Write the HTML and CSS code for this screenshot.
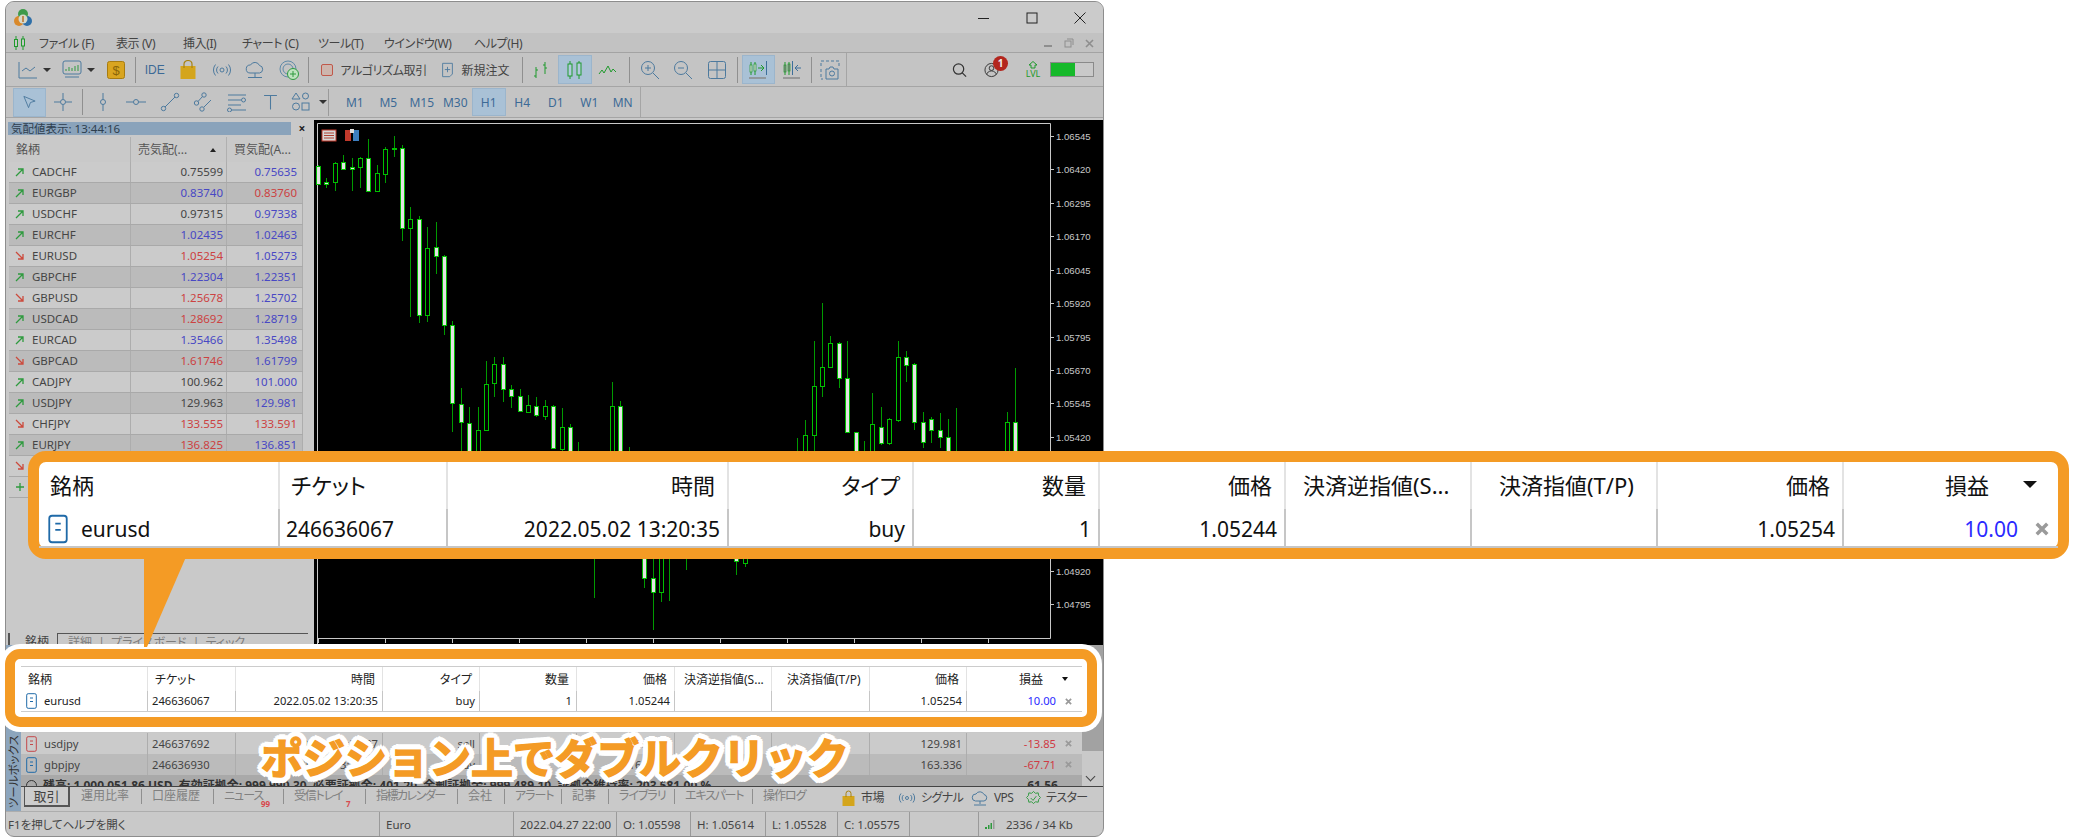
FILE: index.html
```html
<!DOCTYPE html>
<html lang="ja">
<head>
    <meta charset="UTF-8">
    <title>MetaTrader 5</title>
    <link rel="stylesheet" href="styles.css">
</head>
<body>

<div class="window">

    <!-- Title bar -->
    <div class="titlebar">
        <svg class="logo" viewBox="0 0 20 20">
            <circle cx="6" cy="13" r="5" fill="#d9892b"/>
            <circle cx="14" cy="13" r="5" fill="#2f6fa8"/>
            <circle cx="10" cy="6" r="5" fill="#3f9a4a"/>
            <circle cx="10" cy="11" r="4.5" fill="#d8d8c8"/>
            <path d="M10 8v6" stroke="#b8702a" stroke-width="1.5"/>
        </svg>
        <div class="win-btns">
            <svg viewBox="0 0 12 12"><path d="M0 6.5h11" stroke="#222" fill="none"/></svg>
            <svg viewBox="0 0 12 12"><rect x="1" y="1" width="10" height="10" stroke="#222" fill="none"/></svg>
            <svg viewBox="0 0 12 12"><path d="M0.5 0.5l11 11M11.5 0.5l-11 11" stroke="#222" fill="none"/></svg>
        </div>
    </div>

    <!-- Menu -->
    <div class="menubar">
        <svg class="menu-icon" viewBox="0 0 14 14"><path d="M3 0v14M10 0v14" stroke="#1f9a2c"/><rect x="1.5" y="3.5" width="3" height="7" fill="#c8c8c8" stroke="#1f9a2c"/><rect x="8.5" y="3" width="3" height="7" fill="#c8c8c8" stroke="#1f9a2c"/></svg>
        <span class="menu-a">ファイル (F)</span>
        <span class="menu-b">表示 (V)</span>
        <span class="menu-c">挿入(I)</span>
        <span class="menu-d">チャート (C)</span>
        <span class="menu-e">ツール(T)</span>
        <span class="menu-f">ウインドウ(W)</span>
        <span class="menu-g">ヘルプ(H)</span>
        <div class="mdi-btns">
            <svg viewBox="0 0 10 10"><path d="M1 8h8" stroke="#8e8e8e" stroke-width="2"/></svg>
            <svg viewBox="0 0 10 10"><rect x="1" y="3" width="6" height="6" fill="none" stroke="#8e8e8e"/><path d="M3 1h6v6" fill="none" stroke="#8e8e8e"/></svg>
            <svg viewBox="0 0 10 10"><path d="M1 2l7 7M8 2l-7 7" stroke="#8e8e8e" stroke-width="1.6"/></svg>
        </div>
    </div>

    <!-- Toolbar 1 -->
    <div class="toolrow top">
        <div class="tb-frame">
            <div class="drop">
                <svg class="ic20" viewBox="0 0 20 20"><path d="M1 2v16h18M4 11l4-3 4 3 5-4" class="st"/></svg>
                <i class="caret"></i>
            </div>
            <div class="drop">
                <svg class="ic20" viewBox="0 0 20 20"><rect x="1" y="1" width="18" height="13" rx="2" class="st"/><path d="M4 11V9M7 11V7M10 11V8M13 11V6M16 11V5" stroke="#2e9a3e"/><path d="M3 17h14" class="st"/></svg>
                <i class="caret"></i>
            </div>
            <div class="tool gap"><svg class="ic20" viewBox="0 0 20 20"><rect x="1.5" y="1.5" width="17" height="17" rx="2" fill="#d9a520" stroke="#a87c10"/><text x="10" y="15" class="dollar">$</text></svg></div>
            <i class="sep"></i>
            <div class="tool ide">IDE</div>
            <div class="tool"><svg class="ic20" viewBox="0 0 20 20"><path d="M2.5 6h15v13h-15z" fill="#d4a51c"/><path d="M6 8V4a4 3.5 0 018 0v4" fill="none" stroke="#a8820f" stroke-width="1.2"/></svg></div>
            <div class="tool"><svg class="ic20" viewBox="0 0 20 20"><circle cx="10" cy="10" r="2" class="st"/><path d="M6 6.5a5 5 0 000 7M14 6.5a5 5 0 010 7M3.5 4.5a8.5 8.5 0 000 11M16.5 4.5a8.5 8.5 0 010 11" class="st"/></svg></div>
            <div class="tool"><svg class="ic20" viewBox="0 0 20 20"><path d="M5 13a4 4 0 01.5-8 5 5 0 019 .5 3.8 3.8 0 010 7.5z" class="st"/><path d="M10 13v4M3 17.5h14" class="st"/></svg></div>
            <div class="tool"><svg class="ic20" viewBox="0 0 20 20"><circle cx="9" cy="9" r="8" class="st-g"/><circle cx="9" cy="9" r="5" class="st-g"/><circle cx="14" cy="14" r="5.5" fill="#bfe3bf" stroke="#2e9a3e"/><path d="M14 11v6M11 14h6" stroke="#2e9a3e"/></svg></div>
            <i class="sep"></i>
            <div class="txt-btn algo"><i class="algo-box"></i><span>アルゴリズム取引</span></div>
            <div class="txt-btn order">
                <svg class="ic16" viewBox="0 0 14 18"><path d="M1.5 1.5h11v12l-3 3h-8z" class="st"/><path d="M7 5.5v6M4 8.5h6" class="st"/></svg><span>新規注文</span>
            </div>
            <i class="sep"></i>
            <div class="tool"><svg class="ic20" viewBox="0 0 20 20"><path d="M5 7v11M3 16h2M5 10h2M14 2v12M12 5h2M14 8h2" stroke="#1f9a2c" fill="none"/></svg></div>
            <div class="tool on"><svg class="ic20" viewBox="0 0 20 20"><path d="M5 1v18M14 1v18" stroke="#1f9a2c"/><rect x="3" y="4" width="4" height="12" fill="#b3cadf" stroke="#1f9a2c"/><rect x="12" y="3" width="4" height="12" fill="#b3cadf" stroke="#1f9a2c"/></svg></div>
            <div class="tool"><svg class="ic20" viewBox="0 0 20 20"><path d="M1 14l3-4 2 3 4-7 3 6 2-3 3 3" fill="none" stroke="#1f9a2c"/></svg></div>
            <i class="sep wide"></i>
            <div class="tool"><svg class="ic20" viewBox="0 0 20 20"><circle cx="8" cy="8" r="6.5" class="st"/><path d="M8 5v6M5 8h6M13 13l6 6" class="st"/></svg></div>
            <div class="tool"><svg class="ic20" viewBox="0 0 20 20"><circle cx="8" cy="8" r="6.5" class="st"/><path d="M5 8h6M13 13l6 6" class="st"/></svg></div>
            <div class="tool"><svg class="ic20" viewBox="0 0 20 20"><rect x="1.5" y="1.5" width="17" height="17" rx="2" class="st"/><path d="M10 1.5v17M1.5 10h17" class="st"/></svg></div>
            <i class="sep wide"></i>
            <div class="tool on"><svg class="ic20" viewBox="0 0 20 20"><path d="M3 2v13M7 2v13" stroke="#1f9a2c"/><rect x="2" y="5" width="2" height="7" fill="#d8d8d8" stroke="#1f9a2c" stroke-width=".7"/><rect x="6" y="4" width="2" height="7" fill="#d8d8d8" stroke="#1f9a2c" stroke-width=".7"/><path d="M10 8h5M13 5l3 3-3 3" stroke="#1f9a2c" fill="none"/><path d="M18.5 1v14" stroke="#3d6f9a"/><path d="M1 18h17" stroke="#8a8a8a" stroke-width="1.5"/></svg></div>
            <div class="tool"><svg class="ic20" viewBox="0 0 20 20"><path d="M3 2v13M7 2v13" stroke="#1f9a2c"/><rect x="2" y="5" width="2" height="7" fill="#888" stroke="#1f9a2c" stroke-width=".7"/><rect x="6" y="4" width="2" height="7" fill="#888" stroke="#1f9a2c" stroke-width=".7"/><path d="M10.5 1v14" stroke="#3d6f9a"/><path d="M19 8h-5M16 5l-3 3 3 3" stroke="#3d6f9a" fill="none"/><path d="M1 18h17" stroke="#8a8a8a" stroke-width="1.5"/></svg></div>
            <i class="sep"></i>
            <div class="tool"><svg class="ic20" viewBox="0 0 20 20"><path d="M1 6V1h18v5M1 9v10h2" class="st dash"/><path d="M6 9h3l1-2h3l1 2h4v10H6z" class="st"/><circle cx="12" cy="13.5" r="2.5" class="st"/></svg></div>
        </div>
        <div class="right-icons">
            <svg class="ic16" viewBox="0 0 16 16"><circle cx="7" cy="7" r="5.5" fill="none" stroke="#333" stroke-width="1.3"/><path d="M11 11l4 4" stroke="#333" stroke-width="1.3"/></svg>
            <div class="user">
                <svg class="ic16" viewBox="0 0 16 16"><circle cx="8" cy="8" r="7" fill="none" stroke="#333"/><circle cx="8" cy="6" r="2.5" fill="none" stroke="#333"/><path d="M3 13a5 4 0 0110 0" fill="none" stroke="#333"/></svg>
                <span class="badge">1</span>
            </div>
            <div class="lvl">
                <svg viewBox="0 0 10 8"><path d="M5 .5L9 4H7v3H3V4H1z" fill="none" stroke="#1f9a2c"/></svg>
                <span>LVL</span>
            </div>
            <div class="meter"><i></i></div>
        </div>
    </div>

    <!-- Toolbar 2 -->
    <div class="toolrow">
        <div class="tb-frame second">
            <div class="tool on"><svg class="ic16" viewBox="0 0 16 16"><path d="M2 2l12 5-5 1.5L7 14z" class="st"/></svg></div>
            <div class="tool"><svg class="ic20" viewBox="0 0 20 20"><path d="M10 1v6M10 13v6M1 10h6M13 10h6" class="st"/><circle cx="10" cy="10" r="2.5" class="st"/></svg></div>
            <i class="sep"></i>
            <div class="tool shift"><svg class="ic20" viewBox="0 0 20 20"><path d="M10 1v6.5M10 12.5V19" class="st"/><circle cx="10" cy="10" r="2.5" class="st"/></svg></div>
            <div class="tool"><svg class="ic20" viewBox="0 0 20 20"><path d="M0 10h7.5M12.5 10H20" class="st"/><circle cx="10" cy="10" r="2.5" class="st"/></svg></div>
            <div class="tool"><svg class="ic20" viewBox="0 0 20 20"><circle cx="3.5" cy="16.5" r="2.2" class="st"/><circle cx="16.5" cy="3.5" r="2.2" class="st"/><path d="M5 15L15 5" class="st"/></svg></div>
            <div class="tool"><svg class="ic20" viewBox="0 0 20 20"><circle cx="3.5" cy="11" r="2.2" class="st"/><circle cx="11" cy="3" r="2.2" class="st"/><circle cx="9" cy="17" r="2.2" class="st"/><path d="M5 9.5l4.5-5M11 15l7-7" class="st"/></svg></div>
            <div class="tool"><svg class="ic20" viewBox="0 0 20 20"><path d="M1 3h18M1 8h13M1 13h13M4 18h15" class="st"/><circle cx="16.5" cy="8" r="2" class="st"/><circle cx="2.5" cy="18" r="2" class="st"/></svg></div>
            <div class="tool"><svg class="ic16" viewBox="0 0 14 14"><path d="M1 1h12M7 1v13" class="st"/></svg></div>
            <div class="drop shapes">
                <svg class="ic20" viewBox="0 0 20 20"><path d="M5 1l4 6H1z" class="st"/><circle cx="14.5" cy="4" r="3" class="st"/><circle cx="5" cy="14.5" r="3.5" class="st"/><rect x="11" y="11" width="7" height="7" class="st"/></svg>
                <i class="caret"></i>
            </div>
            <i class="grip"></i>
            <div class="tf">M1</div>
            <div class="tf">M5</div>
            <div class="tf">M15</div>
            <div class="tf">M30</div>
            <div class="tf on">H1</div>
            <div class="tf">H4</div>
            <div class="tf">D1</div>
            <div class="tf">W1</div>
            <div class="tf">MN</div>
        </div>
    </div>

    <!-- Market watch + chart -->
    <div class="main">
        <div class="watch">
            <div class="watch-title">
                <span class="watch-name">気配値表示: 13:44:16</span>
                <span class="watch-close">×</span>
            </div>
            <div class="watch-head">
                <div>銘柄</div>
                <div class="sortable">売気配(...<i class="tri-up"></i></div>
                <div>買気配(A...</div>
            </div>
            <div class="wrow"><div class="sym"><svg class="arr up" viewBox="0 0 10 10"><path d="M1 9l7-7M3 2h5v5"/></svg>CADCHF</div><div class="bid">0.75599</div><div class="ask b">0.75635</div></div>
            <div class="wrow"><div class="sym"><svg class="arr up" viewBox="0 0 10 10"><path d="M1 9l7-7M3 2h5v5"/></svg>EURGBP</div><div class="bid b">0.83740</div><div class="ask d">0.83760</div></div>
            <div class="wrow"><div class="sym"><svg class="arr up" viewBox="0 0 10 10"><path d="M1 9l7-7M3 2h5v5"/></svg>USDCHF</div><div class="bid">0.97315</div><div class="ask b">0.97338</div></div>
            <div class="wrow"><div class="sym"><svg class="arr up" viewBox="0 0 10 10"><path d="M1 9l7-7M3 2h5v5"/></svg>EURCHF</div><div class="bid b">1.02435</div><div class="ask b">1.02463</div></div>
            <div class="wrow"><div class="sym"><svg class="arr dn" viewBox="0 0 10 10"><path d="M1 1l7 7M8 3v5H3"/></svg>EURUSD</div><div class="bid d">1.05254</div><div class="ask b">1.05273</div></div>
            <div class="wrow"><div class="sym"><svg class="arr up" viewBox="0 0 10 10"><path d="M1 9l7-7M3 2h5v5"/></svg>GBPCHF</div><div class="bid b">1.22304</div><div class="ask b">1.22351</div></div>
            <div class="wrow"><div class="sym"><svg class="arr dn" viewBox="0 0 10 10"><path d="M1 1l7 7M8 3v5H3"/></svg>GBPUSD</div><div class="bid d">1.25678</div><div class="ask b">1.25702</div></div>
            <div class="wrow"><div class="sym"><svg class="arr up" viewBox="0 0 10 10"><path d="M1 9l7-7M3 2h5v5"/></svg>USDCAD</div><div class="bid d">1.28692</div><div class="ask b">1.28719</div></div>
            <div class="wrow"><div class="sym"><svg class="arr up" viewBox="0 0 10 10"><path d="M1 9l7-7M3 2h5v5"/></svg>EURCAD</div><div class="bid b">1.35466</div><div class="ask b">1.35498</div></div>
            <div class="wrow"><div class="sym"><svg class="arr dn" viewBox="0 0 10 10"><path d="M1 1l7 7M8 3v5H3"/></svg>GBPCAD</div><div class="bid d">1.61746</div><div class="ask b">1.61799</div></div>
            <div class="wrow"><div class="sym"><svg class="arr up" viewBox="0 0 10 10"><path d="M1 9l7-7M3 2h5v5"/></svg>CADJPY</div><div class="bid">100.962</div><div class="ask b">101.000</div></div>
            <div class="wrow"><div class="sym"><svg class="arr up" viewBox="0 0 10 10"><path d="M1 9l7-7M3 2h5v5"/></svg>USDJPY</div><div class="bid">129.963</div><div class="ask b">129.981</div></div>
            <div class="wrow"><div class="sym"><svg class="arr dn" viewBox="0 0 10 10"><path d="M1 1l7 7M8 3v5H3"/></svg>CHFJPY</div><div class="bid d">133.555</div><div class="ask d">133.591</div></div>
            <div class="wrow"><div class="sym"><svg class="arr up" viewBox="0 0 10 10"><path d="M1 9l7-7M3 2h5v5"/></svg>EURJPY</div><div class="bid d">136.825</div><div class="ask b">136.851</div></div>
            <div class="wrow"><div class="sym"><svg class="arr dn" viewBox="0 0 10 10"><path d="M1 1l7 7M8 3v5H3"/></svg>GBPJPY</div><div class="bid d">163.336</div><div class="ask d">163.380</div></div>
            <div class="wrow add"><div class="sym"><svg class="arr up" viewBox="0 0 10 10"><path d="M5 1v8M1 5h8"/></svg></div><div></div><div></div></div>
            <div class="watch-tabs">
                <span class="wtab on">銘柄</span>
                <span class="wtab-rest">詳細 &nbsp;|&nbsp; プライスボード &nbsp;|&nbsp; ティック</span>
            </div>
        </div>
        <div class="chart">
            <svg id="chart" class="chart-svg" viewBox="310 120 791 525">
                <path d="M313.5 645V123.5H1046.5V638.5H313.5" fill="none" stroke="#c8c8c8"/>
                <g>
                    <rect x="318" y="130" width="14" height="11" fill="#d8d8d8" stroke="#c0392b"/>
                    <path d="M320 133h10M320 135.5h10M320 138h10" stroke="#b04030"/>
                    <rect x="341" y="130" width="6" height="11" fill="#c0392b"/>
                    <rect x="349" y="130" width="6" height="11" fill="#3d7fc0"/>
                    <rect x="346" y="129" width="4" height="4" fill="#ddd"/>
                </g>
            </svg>
        </div>
    </div>

    <!-- Toolbox -->
    <div class="toolbox">
        <div class="toolbox-side"><span>ツールボックス</span></div>
        <div class="toolbox-body">
            <div class="trade-rows">
                <div class="trade">
                    <div class="pos-grid small row">
                        <div class="c sym-cell"><svg class="doc red" viewBox="0 0 11 16"><rect x=".7" y=".7" width="9.6" height="14.6" rx="1.5"/><path d="M4 5h3M4 8.5h3"/></svg>usdjpy</div>
                        <div class="c">246637692</div>
                        <div class="c r">2022.05.02 13:31:27</div>
                        <div class="c r">sell</div>
                        <div class="c r">1</div>
                        <div class="c r">129.963</div>
                        <div class="c"></div>
                        <div class="c"></div>
                        <div class="c r">129.981</div>
                        <div class="c last"><span class="loss">-13.85</span><svg class="x" viewBox="0 0 8 8"><path d="M1 1l6 6M7 1l-6 6"/></svg></div>
                    </div>
                    <div class="pos-grid small row alt">
                        <div class="c sym-cell"><svg class="doc" viewBox="0 0 11 16"><rect x=".7" y=".7" width="9.6" height="14.6" rx="1.5"/><path d="M4 5h3M4 8.5h3"/></svg>gbpjpy</div>
                        <div class="c">246636930</div>
                        <div class="c r">2022.05.02 13:24:02</div>
                        <div class="c r">buy</div>
                        <div class="c r">1</div>
                        <div class="c r">163.450</div>
                        <div class="c"></div>
                        <div class="c"></div>
                        <div class="c r">163.336</div>
                        <div class="c last"><span class="loss">-67.71</span><svg class="x" viewBox="0 0 8 8"><path d="M1 1l6 6M7 1l-6 6"/></svg></div>
                    </div>
                    <div class="balance">
                        <span class="bal-text"><i class="bal-dot"></i>残高: 1 000 051.86 USD &nbsp;有効証拠金: 999 990.30 &nbsp;必要証拠金: 401.20 &nbsp;余剰証拠金: 999 489.10 &nbsp;証拠金維持率: 203 581.00 %</span>
                        <span class="bal-sum">61.56</span>
                    </div>
                </div>
                <div class="scrollbar"><i class="thumb"></i><i class="scroll-down"></i></div>
            </div>
            <div class="tabs">
                <span class="tab on">取引</span>
                <span class="tab t1">運用比率</span><i class="tsep"></i>
                <span class="tab t3">口座履歴</span><i class="tsep"></i>
                <span class="tab t2">ニュース<sub>99</sub></span><i class="tsep"></i>
                <span class="tab t4">受信トレイ<sub>7</sub></span><i class="tsep"></i>
                <span class="tab t5">指標カレンダー</span><i class="tsep"></i>
                <span class="tab t6">会社</span><i class="tsep"></i>
                <span class="tab t7">アラート</span><i class="tsep"></i>
                <span class="tab t6">記事</span><i class="tsep"></i>
                <span class="tab t8">ライブラリ</span><i class="tsep"></i>
                <span class="tab t9">エキスパート</span><i class="tsep"></i>
                <span class="tab t8">操作ログ</span>
                <div class="tab-links">
                    <span class="l-market"><svg class="ic16" viewBox="0 0 14 16"><path d="M1 6h12v10H1z" fill="#d4a51c"/><path d="M4.5 7V3.5a2.5 2.5 0 015 0V7" fill="none" stroke="#a8820f"/></svg>市場</span>
                    <span class="l-signal"><svg class="ic-sig" viewBox="0 0 18 10"><circle cx="9" cy="5" r="1.5" class="st"/><path d="M5.5 2a4 4 0 000 6M12.5 2a4 4 0 010 6M3 .5a7 7 0 000 9M15 .5a7 7 0 010 9" class="st"/></svg>シグナル</span>
                    <span class="l-vps"><svg class="ic-cloud" viewBox="0 0 18 16"><path d="M4.5 11a3.5 3.5 0 01.5-7 4.5 4.5 0 018 .5 3.3 3.3 0 010 6.5z" class="st"/><path d="M9 11v3M3 15h12" class="st"/></svg>VPS</span>
                    <span class="l-tester"><svg class="ic16" viewBox="0 0 16 16"><path d="M8 1l2 2 3-.5.5 3 2 2-2 2-.5 3-3-.5-2 2-2-2-3 .5-.5-3-2-2 2-2 .5-3 3 .5z" fill="none" stroke="#2e9a3e"/><path d="M5 8l2.5 2.5L11 6" fill="none" stroke="#2e9a3e"/></svg>テスター</span>
                </div>
            </div>
        </div>
    </div>

    <!-- Status bar -->
    <div class="statusbar">
        <div class="s1">F1を押してヘルプを開く</div>
        <div class="s2">Euro</div>
        <div class="s3">2022.04.27 22:00</div>
        <div class="s4">O: 1.05598</div>
        <div class="s5">H: 1.05614</div>
        <div class="s6">L: 1.05528</div>
        <div class="s7">C: 1.05575</div>
        <div class="s8"></div>
        <div class="s9"><svg class="bars" viewBox="0 0 10 9"><path d="M0 7h2v2H0zM3 5h1.5v4H3zM5.5 3H7v6H5.5z" fill="#2e9a3e"/><path d="M8 0h1.5v9H8z" fill="#9a9a9a"/></svg>2336 / 34 Kb</div>
    </div>
</div>

<!-- Large callout -->
<div class="callout-big">
    <div class="pos-grid big head">
        <div class="h">銘柄</div>
        <div class="h">チケット</div>
        <div class="h r">時間</div>
        <div class="h r">タイプ</div>
        <div class="h r">数量</div>
        <div class="h r">価格</div>
        <div class="h i1">決済逆指値(S...</div>
        <div class="h i2">決済指値(T/P)</div>
        <div class="h r">価格</div>
        <div class="h last">損益<i class="tri-down"></i></div>
    </div>
    <div class="pos-grid big row">
        <div class="c sym-cell"><svg class="doc" viewBox="0 0 11 16"><rect x=".7" y=".7" width="9.6" height="14.6" rx="1.5"/><path d="M4 5h3M4 8.5h3"/></svg>eurusd</div>
        <div class="c">246636067</div>
        <div class="c r">2022.05.02 13:20:35</div>
        <div class="c r">buy</div>
        <div class="c r">1</div>
        <div class="c r">1.05244</div>
        <div class="c"></div>
        <div class="c"></div>
        <div class="c r">1.05254</div>
        <div class="c last"><span class="gain">10.00</span><svg class="x" viewBox="0 0 8 8"><path d="M1 1l6 6M7 1l-6 6"/></svg></div>
    </div>
</div>

<!-- Small callout -->
<div class="callout-small">
    <div class="pos-grid small head">
        <div class="h">銘柄</div>
        <div class="h">チケット</div>
        <div class="h r">時間</div>
        <div class="h r">タイプ</div>
        <div class="h r">数量</div>
        <div class="h r">価格</div>
        <div class="h i1">決済逆指値(S...</div>
        <div class="h i2">決済指値(T/P)</div>
        <div class="h r">価格</div>
        <div class="h last">損益<i class="tri-down"></i></div>
    </div>
    <div class="pos-grid small row">
        <div class="c sym-cell"><svg class="doc" viewBox="0 0 11 16"><rect x=".7" y=".7" width="9.6" height="14.6" rx="1.5"/><path d="M4 5h3M4 8.5h3"/></svg>eurusd</div>
        <div class="c">246636067</div>
        <div class="c r">2022.05.02 13:20:35</div>
        <div class="c r">buy</div>
        <div class="c r">1</div>
        <div class="c r">1.05244</div>
        <div class="c"></div>
        <div class="c"></div>
        <div class="c r">1.05254</div>
        <div class="c last"><span class="gain">10.00</span><svg class="x" viewBox="0 0 8 8"><path d="M1 1l6 6M7 1l-6 6"/></svg></div>
    </div>
</div>

<svg class="tail" viewBox="0 0 44 92"><path d="M0 0H42L3 90H0z" fill="#f49b25"/></svg>

<div class="caption">ポジション上でダブルクリック</div>

<script src="chart.js"></script>
</body>
</html>
```

FILE: styles.css
```css
/* General */
* {
    box-sizing: border-box;
}

body {
    margin: 0;
    width: 2074px;
    height: 838px;
    overflow: hidden;
    position: relative;
    background: #fff;
    font-family: "Noto Sans", "Noto Sans CJK JP", sans-serif;
    font-feature-settings: "palt";
    font-size: 12px;
    color: #444;
}

i {
    display: block;
}

.st, .st-g {
    fill: none;
    stroke: #4d7a9e;
}

.st-g {
    stroke: #5f8aa8;
}

.dash {
    stroke-dasharray: 3 2;
}

.ic20 {
    width: 20px;
    height: 20px;
    flex: none;
}

.ic16 {
    width: 15px;
    height: 16px;
    flex: none;
}

/* Window */
.window {
    margin: 1px 0 0 5px;
    width: 1099px;
    height: 836px;
    border: 1px solid #8d8d8d;
    border-radius: 9px;
    background: #c9c9c9;
    overflow: hidden;
    display: flex;
    flex-direction: column;
}

.titlebar {
    height: 31px;
    flex: none;
    display: flex;
    align-items: center;
    padding-left: 7px;
    background: #cbcbcb;
}

.logo {
    width: 20px;
    height: 20px;
}

.win-btns {
    margin-left: auto;
    display: flex;
    gap: 36px;
    padding-right: 17px;
}

.win-btns svg {
    width: 12px;
    height: 12px;
}

/* Menu */
.menubar {
    height: 20px;
    flex: none;
    display: flex;
    align-items: center;
    background: #c2c2c2;
    border-bottom: 1px solid #a3a3a3;
    padding-left: 7px;
    color: #444;
    letter-spacing: -0.4px;
    white-space: nowrap;
}

.menu-icon {
    width: 14px;
    height: 14px;
}

.menu-a { margin-left: 12px; width: 77px; }
.menu-b { width: 67px; }
.menu-c { width: 59px; }
.menu-d { width: 76px; }
.menu-e { width: 66px; }
.menu-f { width: 90px; }

.mdi-btns {
    margin-left: auto;
    display: flex;
    gap: 11px;
    padding-right: 8px;
}

.mdi-btns svg {
    width: 10px;
    height: 10px;
}

/* Toolbars */
.toolrow {
    height: 31px;
    flex: none;
    display: flex;
    align-items: stretch;
    background: #c4c4c4;
    border-bottom: 1px solid #a5a5a5;
}

.toolrow.top {
    height: 34px;
}

.tb-frame {
    display: flex;
    align-items: center;
    width: 841px;
    padding-left: 2px;
    border-right: 1px solid #a5a5a5;
}

.tb-frame.second {
    width: 635px;
    padding-left: 6.5px;
}

.tool {
    width: 33.5px;
    height: 29px;
    flex: none;
    display: flex;
    align-items: center;
    justify-content: center;
}

.tool.gap {
    margin-left: 3.5px;
}

.tool.shift {
    margin-left: 1.5px;
}

.tool.on, .tf.on {
    background: #a9c1d6;
    border: 1px solid #9bb5cc;
}

.tool.ide {
    color: #3c6a96;
    font-size: 12px;
    font-family: "Liberation Sans", sans-serif;
}

.drop {
    width: 44px;
    height: 29px;
    flex: none;
    display: flex;
    align-items: center;
    padding-left: 10px;
}

.drop.shapes {
    width: 38px;
    padding-left: 4px;
    flex: none;
}

.caret {
    margin-left: 5px;
    border-left: 4px solid transparent;
    border-right: 4px solid transparent;
    border-top: 4px solid #333;
}

.shapes .caret {
    margin-left: 8px;
}

.sep {
    width: 5px;
    height: 26px;
    flex: none;
    background: linear-gradient(#8f8f8f, #8f8f8f) center / 1px 100% no-repeat;
}

.sep.wide {
    width: 8px;
}

.grip {
    width: 13px;
    height: 27px;
    flex: none;
    background: linear-gradient(#9a9a9a, #9a9a9a) 3px 0 / 1px 100% no-repeat;
}

.dollar {
    fill: #8a6508;
    font-size: 13px;
    text-anchor: middle;
    font-family: "Liberation Sans", sans-serif;
}

.txt-btn {
    height: 29px;
    flex: none;
    display: flex;
    align-items: center;
    color: #444;
    white-space: nowrap;
}

.txt-btn.algo {
    width: 120px;
    padding-left: 10px;
    gap: 8px;
    letter-spacing: -0.4px;
}

.algo-box {
    width: 12px;
    height: 12px;
    background: #cdb5ad;
    border: 1px solid #c0584a;
    border-radius: 2px;
}

.txt-btn.order {
    width: 89px;
    padding-left: 9px;
    gap: 7px;
}

.tf {
    width: 33.5px;
    height: 28px;
    flex: none;
    display: flex;
    align-items: center;
    justify-content: center;
    color: #3c6a96;
    font-size: 12px;
}

.right-icons {
    display: flex;
    align-items: center;
    padding-left: 105px;
}

.user {
    position: relative;
    width: 22px;
    margin-left: 17px;
    display: flex;
    align-items: center;
}

.badge {
    position: absolute;
    left: 9px;
    top: -6px;
    width: 15px;
    height: 15px;
    border-radius: 50%;
    background: #b3261e;
    color: #eee;
    font-size: 10px;
    line-height: 15px;
    text-align: center;
    font-weight: bold;
}

.lvl {
    width: 16px;
    margin-left: 19px;
    color: #1f9a2c;
    font-size: 9px;
    line-height: 9px;
    text-align: center;
}

.lvl svg {
    display: block;
    width: 10px;
    height: 8px;
    margin: 0 auto;
}

.meter {
    width: 44px;
    height: 15px;
    margin-left: 9px;
    background: #c9c9c9;
    border: 1px solid #8a8a8a;
}

.meter i {
    width: 24px;
    height: 13px;
    background: #16b92a;
}

/* Main area */
.main {
    height: 527px;
    flex: none;
    display: flex;
    padding-top: 2px;
    background: #c9c9c9;
}

.watch {
    width: 304px;
    flex: none;
    display: flex;
    flex-direction: column;
    padding: 2px 0 0 2px;
}

.watch-title {
    height: 13px;
    display: flex;
    flex: none;
    align-items: center;
    justify-content: space-between;
    font-size: 11.5px;
    line-height: 13px;
}

.watch-name {
    width: 283px;
    height: 13px;
    background: #8aa3bb;
    color: #2e3e4e;
    padding-left: 3px;
    overflow: hidden;
}

.watch-close {
    width: 16px;
    text-align: center;
    font-weight: bold;
    color: #222;
    font-size: 12px;
}

.watch-head, .wrow {
    display: grid;
    grid-template-columns: 122px 96px 76px;
    margin-left: 1px;
    width: 294px;
    flex: none;
}

.watch-head {
    margin-top: 2px;
    height: 25px;
    line-height: 24px;
    color: #555;
}

.watch-head div {
    border-right: 1px solid #b0b0b0;
    padding-left: 7px;
    display: flex;
    align-items: center;
}

.sortable {
    padding-right: 10px;
    justify-content: space-between;
}

.wrow {
    height: 21px;
    line-height: 20px;
    font-size: 11.5px;
    background: #cbcbcb;
    border-bottom: 1px solid #a9a9a9;
}

.wrow:nth-of-type(even) {
    background: #bbb;
}

.wrow div {
    border-right: 1px solid #adadad;
    text-align: right;
    padding-right: 3px;
    color: #454545;
}

.wrow .ask {
    padding-right: 5px;
}

.wrow .sym {
    display: flex;
    align-items: center;
    gap: 7px;
    padding-left: 6px;
    text-align: left;
}

.wrow .b { color: #4848c4; }
.wrow .d { color: #cc4242; }

.wrow.add {
    background: #c9c9c9;
}

.arr {
    width: 10px;
    height: 10px;
    fill: none;
    stroke-width: 1.3;
}

.arr.up { stroke: #2e9a3e; }
.arr.dn { stroke: #cc4a3c; }

.tri-up {
    border-left: 3.5px solid transparent;
    border-right: 3.5px solid transparent;
    border-bottom: 4px solid #222;
}

.watch-tabs {
    margin-top: auto;
    height: 12px;
    display: flex;
    overflow: hidden;
    line-height: 18px;
    color: #7d7d7d;
}

.wtab {
    width: 49px;
    padding-left: 15px;
    color: #444;
    border-left: 2px solid #555;
}

.wtab-rest {
    flex: 1;
    border-top: 1px solid #555;
    border-left: 1px solid #555;
    padding-left: 10px;
    margin-right: 2px;
}

.chart {
    width: 791px;
    height: 525px;
    margin-left: 4px;
    flex: none;
    background: #000;
}

.chart-svg {
    display: block;
    width: 791px;
    height: 525px;
}

.axis-label {
    fill: #c8c8c8;
    font-family: "Liberation Sans", sans-serif;
    font-size: 9.6px;
}

/* Toolbox */
.toolbox {
    height: 166px;
    flex: none;
    display: flex;
}

.toolbox-side {
    width: 15px;
    flex: none;
    background: #8ca5bd;
    display: flex;
    align-items: flex-end;
    justify-content: center;
}

.toolbox-side span {
    writing-mode: vertical-rl;
    text-orientation: sideways;
    transform: rotate(180deg);
    font-size: 11.5px;
    line-height: 14px;
    color: #333;
    margin-bottom: 3px;
}

.toolbox-body {
    flex: 1;
    display: flex;
    flex-direction: column;
}

.trade-rows {
    height: 142px;
    flex: none;
    display: flex;
    overflow: hidden;
    border-bottom: 1px solid #444;
}

.trade {
    width: 1061px;
    flex: none;
    padding-top: 88px;
}

.balance {
    height: 21px;
    display: flex;
    justify-content: space-between;
    background: #a9a9a9;
    font-weight: bold;
    font-size: 12px;
    line-height: 21px;
    color: #333;
    padding: 0 24px 0 5px;
    white-space: nowrap;
}

.bal-text {
    display: flex;
    align-items: center;
    gap: 6px;
}

.bal-dot {
    width: 11px;
    height: 11px;
    border: 1px solid #333;
    border-radius: 50%;
}

.scrollbar {
    position: relative;
    flex: 1;
    background: #c9c9c9;
}

.thumb {
    height: 106px;
    background: #a2a2a2;
}

.scroll-down {
    position: absolute;
    left: 5px;
    top: 128px;
    width: 7px;
    height: 7px;
    border-right: 1.5px solid #444;
    border-bottom: 1.5px solid #444;
    transform: rotate(45deg);
}

/* Tabs */
.tabs {
    flex: 1;
    display: flex;
    align-items: flex-start;
    padding-left: 3px;
    color: #808080;
    line-height: 18px;
    white-space: nowrap;
}

.tab {
    flex: none;
    position: relative;
    letter-spacing: -0.6px;
}

.tab.on {
    width: 46px;
    height: 20px;
    margin-right: 11px;
    text-align: center;
    color: #444;
    background: #cdcdcd;
    border: solid #555;
    border-width: 0 2px 2px 1px;
    font-size: 13px;
    letter-spacing: 0;
}

.t1 { width: 49px; letter-spacing: 0; }
.t3 { width: 50px; letter-spacing: 0; }
.t2 { width: 36px; margin-right: 12px; letter-spacing: -1px; }
.t4 { width: 51px; margin-right: 9px; letter-spacing: -1.2px; }
.t5 { width: 70px; letter-spacing: -1.5px; }
.t6 { width: 25px; letter-spacing: 0; }
.t7 { width: 35px; letter-spacing: -1px; }
.t8 { width: 44px; letter-spacing: -1px; }
.t9 { width: 56px; letter-spacing: -1.2px; }

.tab sub {
    position: absolute;
    left: 100%;
    bottom: -3px;
    font-size: 8px;
    line-height: 8px;
    font-weight: bold;
    color: #d8484e;
    margin-left: 1px;
    letter-spacing: 0;
}

.tsep {
    width: 1px;
    height: 15px;
    margin: 2px 10px 0 11px;
    background: #8f8f8f;
    flex: none;
}

.tab-links {
    margin-left: auto;
    display: flex;
    align-items: center;
    padding-top: 2px;
    color: #444;
    width: 262px;
}

.tab-links span {
    display: flex;
    align-items: center;
    gap: 5px;
    letter-spacing: -0.6px;
    flex: none;
}

.l-market { width: 57px; }
.l-signal { width: 73px; }
.l-vps { width: 55px; }

.ic-sig {
    width: 18px;
    height: 10px;
}

.ic-cloud {
    width: 18px;
    height: 16px;
}

/* Status bar */
.statusbar {
    flex: 1;
    display: flex;
    align-items: center;
    border-top: 1px solid #adadad;
    color: #444;
    font-size: 11.5px;
    white-space: nowrap;
}

.statusbar > div {
    height: 100%;
    display: flex;
    align-items: center;
    padding-left: 6px;
    border-right: 1px solid #9a9a9a;
    flex: none;
}

.statusbar .s1 { width: 374px; padding-left: 2px; }
.s2 { width: 134px; }
.s3 { width: 103px; }
.s4 { width: 74px; }
.s5 { width: 75px; }
.s6 { width: 72px; }
.s7 { width: 72px; }
.s8 { width: 69px; }

.statusbar .s9 {
    border-right: 0;
    gap: 11px;
}

.bars {
    width: 10px;
    height: 9px;
}

/* Position tables */
.pos-grid {
    display: grid;
}

.pos-grid.big {
    grid-template-columns: 241px 168px 281px 185px 186px 186px 186px 186px 186px 215px;
    font-size: 21px;
    color: #111;
}

.pos-grid.small {
    grid-template-columns: 127px 88px 147px 97px 97px 98px 97px 98px 97px 115px;
    font-size: 11.2px;
    color: #444;
}

.callout-small .pos-grid.small {
    color: #222;
}

.big.head { height: 47px; font-size: 22px; }
.big.row { height: 39px; }
.small.head { height: 25px; font-size: 12px; }
.small.row { height: 21px; line-height: 20px; background: #cbcbcb; }
.small.row.alt { background: #bbb; }

.callout-small .small.row {
    background: #fff;
}

.h, .c {
    display: flex;
    align-items: center;
    white-space: nowrap;
    overflow: hidden;
}

.h.r, .c.r {
    justify-content: flex-end;
}

.big .h { padding: 0 12px 3px 11px; border-right: 2px solid #e3e3e3; }
.big .c { padding: 2px 7px 0 6px; border-right: 2px solid #c6c6c6; }
.big .h.i1 { padding-left: 17px; }
.big .h.i2 { padding-left: 27px; }
.big .h.last, .big .c.last { border-right: 0; justify-content: flex-end; }
.big .h.last { padding-right: 22px; gap: 34px; }
.big .c.last { padding-right: 10px; gap: 17px; }
.big .sym-cell { padding-left: 9px; gap: 13px; }
.big .doc { width: 20px; height: 30px; }
.big .x { width: 14px; height: 14px; }

.small .h { padding: 0 7px; border-right: 1px solid #e3e3e3; }
.small .c { padding: 0 4px; border-right: 1px solid #c6c6c6; }
.small .h.i1 { padding-left: 9px; }
.small .h.i2 { padding-left: 15px; }
.small .h.last, .small .c.last { border-right: 0; justify-content: flex-end; }
.small .h.last { padding-right: 14px; gap: 19px; }
.small .c.last { padding-right: 10px; gap: 9px; }
.small .sym-cell { padding-left: 5px; gap: 7px; }
.small .doc { width: 11px; height: 16px; }
.small .x { width: 7px; height: 7px; }

.trade .c {
    border-right-color: #adadad;
}

.doc {
    flex: none;
    fill: none;
    stroke: #1f6aa8;
    stroke-width: 1;
}

.doc.red {
    stroke: #c4484a;
}

.x {
    flex: none;
    fill: none;
    stroke: #9a9a9a;
    stroke-width: 2;
}

.gain { color: #2a2aff; }
.loss { color: #cf3a44; }

.tri-down {
    border-left: 7px solid transparent;
    border-right: 7px solid transparent;
    border-top: 7px solid #111;
}

.small .tri-down {
    border-left-width: 3.5px;
    border-right-width: 3.5px;
    border-top-width: 4px;
}

/* Callouts */
.callout-big, .callout-small, .tail, .caption {
    position: absolute;
}

.callout-big {
    left: 28px;
    top: 451px;
    width: 2041px;
    height: 108px;
    background: #fff;
    border: 11px solid #f49b25;
    border-radius: 18px;
}

.big.row {
    border-bottom: 2px solid #c6c6c6;
}

.callout-small {
    left: 5px;
    top: 649px;
    width: 1092px;
    height: 78px;
    padding: 7px 5px 5px 6px;
    background: #fff;
    border: 10px solid #f49b25;
    border-radius: 15px;
    box-shadow: 0 0 0 5px #fff;
}

.callout-small .head {
    border-top: 1px solid #ccc;
}

.callout-small .row {
    border-bottom: 1px solid #ccc;
}

.tail {
    left: 144px;
    top: 557px;
    width: 44px;
    height: 92px;
}

.caption {
    left: 261px;
    top: 726px;
    font-size: 42px;
    line-height: 60px;
    font-weight: 700;
    font-feature-settings: normal;
    font-family: "Noto Sans CJK JP", sans-serif;
    color: #f49b25;
    -webkit-text-stroke: 1.5px #f49b25;
    text-shadow:
        6px 0 #fff, -6px 0 #fff, 0 6px #fff, 0 -6px #fff,
        4px 4px #fff, -4px 4px #fff, 4px -4px #fff, -4px -4px #fff,
        5.5px 2.5px #fff, -5.5px 2.5px #fff, 5.5px -2.5px #fff, -5.5px -2.5px #fff,
        2.5px 5.5px #fff, -2.5px 5.5px #fff, 2.5px -5.5px #fff, -2.5px -5.5px #fff;
    white-space: nowrap;
}
```

FILE: chart.js
```js
// Candles: [slot, wickTop, wickBottom, bodyTop, bodyBottom, filled]. No body = wick only.
const candles = [
    [0, 165, 185, 166, 184, 1], [1, 178, 188, 182, 184, 1], [2, 162, 191, 163, 182, 0],
    [3, 155, 170, 162, 169, 1], [4, 158, 191, 167, 169, 1], [5, 157, 188, 158, 167, 0],
    [6, 139, 192, 158, 191, 1], [7, 165, 192, 173, 191, 0], [8, 147, 183, 149, 174, 0],
    [9, 136, 157, 148, 149, 1], [10, 145, 241, 148, 228, 1], [11, 207, 317, 219, 228, 0],
    [12, 216, 323, 219, 315, 1], [13, 227, 322, 248, 315, 0], [14, 222, 274, 247, 256, 1],
    [15, 255, 335, 256, 325, 1], [16, 321, 432, 325, 403, 1], [17, 388, 455, 404, 422, 1],
    [18, 407, 455, 423, 455, 1], [19, 407, 455, 430, 455, 0], [20, 361, 430, 384, 430, 0],
    [21, 357, 397, 364, 383, 0], [22, 357, 402, 364, 389, 1], [23, 385, 408, 389, 396, 1],
    [24, 389, 412, 396, 411, 1], [25, 395, 413, 405, 412, 0], [26, 397, 417, 406, 415, 1],
    [27, 400, 420, 406, 416, 0], [28, 405, 448, 406, 448, 1], [29, 408, 455, 427, 449, 0],
    [30, 424, 455, 427, 455, 1], [31, 442, 455], [35, 382, 455, 406, 455, 0],
    [36, 401, 455, 406, 455, 1], [37, 447, 455], [57, 438, 455], [58, 420, 455, 435, 455, 0],
    [59, 341, 455, 386, 435, 0], [60, 303, 397, 367, 386, 0], [61, 336, 368, 343, 367, 0],
    [62, 342, 388, 343, 378, 1], [63, 341, 432, 378, 432, 1], [64, 432, 455, 432, 455, 1],
    [65, 441, 455], [66, 393, 455, 424, 455, 0], [67, 407, 445, 427, 443, 1],
    [68, 418, 445, 419, 443, 0], [69, 341, 422, 357, 420, 0], [70, 351, 382, 357, 365, 1],
    [71, 363, 430, 364, 422, 1], [72, 412, 448, 422, 442, 1], [73, 417, 443, 419, 430, 1],
    [74, 413, 448, 430, 437, 1], [75, 419, 455, 437, 455, 1], [76, 408, 455],
    [82, 412, 455, 422, 455, 0], [83, 368, 455, 422, 455, 1],
    // below the big callout
    [32.86, 555, 598], [38.8, 555, 588, 555, 578, 1], [39.9, 555, 630, 578, 592, 1],
    [40.8, 555, 602, 555, 592, 0], [41.8, 555, 601], [43.8, 555, 570],
    [49.76, 555, 575, 555, 561, 1], [50.83, 555, 567, 555, 563, 0]
];

const svg = document.getElementById('chart');

function add(tag, attrs, text) {
    const el = document.createElementNS('http://www.w3.org/2000/svg', tag);
    Object.keys(attrs).forEach(k => el.setAttribute(k, attrs[k]));
    if (text) el.textContent = text;
    svg.appendChild(el);
}

candles.forEach(c => {
    const x = Math.round(314 + 8.4 * c[0]);
    add('path', { d: `M${x + 0.5} ${c[1]}V${c[2]}`, stroke: '#009a00' });
    if (c.length > 3) {
        add('rect', {
            x: x - 1.5, y: c[3] + 0.5, width: 4, height: c[4] - c[3],
            fill: c[5] ? '#e2e2e2' : '#000', stroke: '#00c000'
        });
    }
});

// Price axis
for (let i = 0; i < 15; i++) {
    const y = Math.round(135.7 + 33.47 * i);
    add('path', { d: `M1046 ${y + 0.5}h4`, stroke: '#c8c8c8' });
    add('text', { x: 1052, y: y + 4, class: 'axis-label' }, (1.06545 - i * 0.00125).toFixed(5));
}

// Time axis ticks
for (let x = 314; x < 1046; x += 67) {
    add('path', { d: `M${x + 0.5} 639v4`, stroke: '#c8c8c8' });
}
```
